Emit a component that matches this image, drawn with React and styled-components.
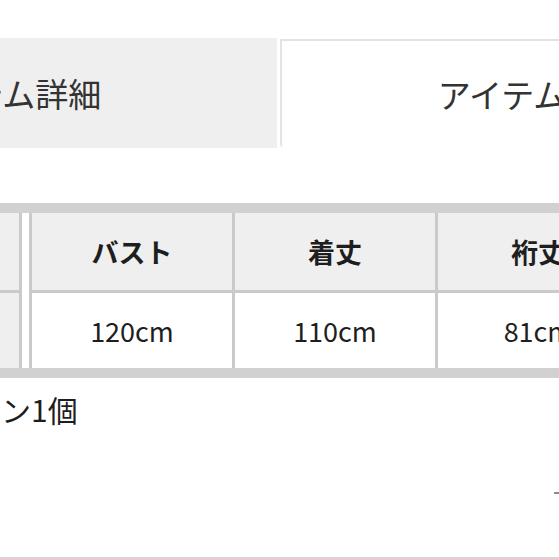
import React from "react";
import styled, { createGlobalStyle } from "styled-components";

const GlobalStyle = createGlobalStyle`
  html, body { margin: 0; padding: 0; background: #fff; overflow: hidden; }
  body { font-family: "Noto Sans CJK JP", "Noto Sans", sans-serif; color: #222; }
`;

const Page = styled.div`
  width: 559px;
  height: 559px;
  overflow: hidden;
  display: flex;
  flex-direction: column;
`;

const Shift = styled.div`
  margin-left: -263px;
  width: 1400px;
  padding-top: 38px;
  display: flex;
  flex-direction: column;
`;

const Tabs = styled.div`
  display: flex;
  gap: 3px;
  align-items: flex-start;
`;

const Tab = styled.div`
  box-sizing: border-box;
  width: 540px;
  height: ${(p) => (p.$active ? "108px" : "110px")};
  margin-top: ${(p) => (p.$active ? "1px" : "0")};
  padding-right: ${(p) => (p.$active ? "0" : "6px")};
  background: ${(p) => (p.$active ? "#fff" : "#efefef")};
  border-top: ${(p) => (p.$active ? "2px solid #e3e3e3" : "none")};
  border-left: ${(p) => (p.$active ? "2px solid #e3e3e3" : "none")};
  border-bottom-left-radius: ${(p) => (p.$active ? "3px" : "0")};
  display: flex;
  align-items: center;
  justify-content: center;
  font-size: 33px;
  color: #333;
  white-space: nowrap;
`;

const TableWrap = styled.div`
  margin-top: 55px;
  margin-left: 82px;
  display: flex;
  border-top: 10px solid #d1d1d1;
  border-bottom: 10px solid #d1d1d1;
  width: max-content;
`;

const FixedCol = styled.div`
  display: flex;
  flex-direction: column;
  border-right: 3px solid #cacaca;
`;

const Spacer = styled.div`
  width: 7px;
  background: #fff;
`;

const Grid = styled.div`
  display: grid;
  grid-template-columns: repeat(4, 203px);
  border-left: 3px solid #cacaca;
`;

const Cell = styled.div`
  box-sizing: border-box;
  width: ${(p) => (p.$fixed ? "200px" : "203px")};
  height: ${(p) => (p.$head ? "77px" : "78px")};
  border-top: ${(p) => (p.$head ? "none" : "3px solid #cacaca")};
  border-right: ${(p) => (p.$fixed ? "none" : "3px solid #cacaca")};
  background: ${(p) => (p.$head || p.$fixed ? "#efefef" : "#fff")};
  display: flex;
  align-items: center;
  justify-content: center;
  font-size: 27px;
  font-weight: ${(p) => (p.$head ? 700 : 400)};
  color: #1e1e1e;
  white-space: nowrap;
`;

const Note = styled.p`
  margin: 11px 0 0;
  padding-left: 24px;
  font-size: 30px;
  line-height: 40px;
  color: #1e1e1e;
  white-space: nowrap;
`;

const Footer = styled.div`
  margin-top: 63px;
  display: flex;
  justify-content: flex-end;
`;

const Dash = styled.span`
  width: 8px;
  height: 2px;
  margin-right: -3px;
  background: #8a8a8a;
`;

const BottomRule = styled.div`
  margin-top: 63px;
  height: 5px;
  background: #f7f7f7;
  border-bottom: 2px solid #d6d6d6;
`;

const headers = ["バスト", "着丈", "裄丈", "袖丈"];
const values = ["120cm", "110cm", "81cm", "52cm"];

export default function App() {
  return (
    <>
      <GlobalStyle />
      <Page>
        <Shift>
          <Tabs>
            <Tab>アイテム詳細</Tab>
            <Tab $active>アイテムサイズ</Tab>
          </Tabs>
          <TableWrap>
            <FixedCol>
              <Cell $fixed $head>サイズ</Cell>
              <Cell $fixed>F</Cell>
            </FixedCol>
            <Spacer />
            <Grid>
              {headers.map((h) => (
                <Cell key={h} $head>{h}</Cell>
              ))}
              {values.map((v) => (
                <Cell key={v}>{v}</Cell>
              ))}
            </Grid>
          </TableWrap>
          <Note>付属品：予備ボタン1個</Note>
        </Shift>
        <Footer>
          <Dash />
        </Footer>
        <BottomRule />
      </Page>
    </>
  );
}
